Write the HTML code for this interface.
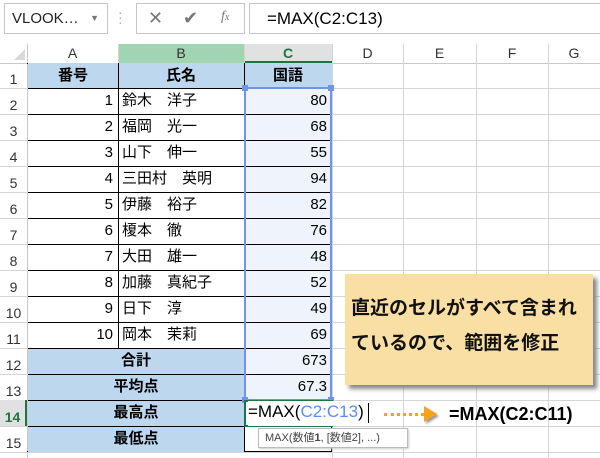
<!DOCTYPE html>
<html><head><meta charset="utf-8"><style>
*{box-sizing:border-box;margin:0;padding:0}
body{width:600px;height:458px;overflow:hidden;background:#fff;position:relative;font-family:"Liberation Sans","Noto Sans CJK JP",sans-serif;color:#000}
.a{position:absolute}
.vl{position:absolute;width:1px;background:#d4d4d4}
.hl{position:absolute;height:1px;background:#d4d4d4}
.rh{position:absolute;left:0;width:27px;font-size:14px;color:#333;text-align:center;line-height:26px;padding-top:4px}
.ch{position:absolute;top:44px;height:19px;font-size:14px;color:#333;text-align:center;line-height:19px;background:#fff}
.c{position:absolute;font-size:15px;line-height:26px;white-space:nowrap;overflow:hidden}
.hd{background:#bdd7ee;font-weight:bold;text-align:center}
.n{text-align:right;padding-right:5px}
.t{padding-left:4px}
</style></head><body>
<div class="a" style="left:4px;top:3px;width:104px;height:31px;border:1px solid #c6c6c6;font-size:15px;line-height:29px;padding-left:7px;color:#222">VLOOK…<span style="position:absolute;right:8px;top:0;font-size:9px;color:#777">▼</span></div>
<div class="a" style="left:118px;top:10px;color:#aaa;font-size:14px;line-height:5px">·<br>·<br>·</div>
<div class="a" style="left:136px;top:3px;width:109px;height:31px;border:1px solid #c6c6c6"></div>
<div class="a" style="left:148px;top:8px;font-size:18px;color:#777">✕</div>
<div class="a" style="left:183px;top:8px;font-size:18px;color:#777">✔</div>
<div class="a" style="left:221px;top:9px;font-size:14px;color:#777;font-family:'Liberation Serif',serif;font-style:italic">f<span style="font-size:10px">x</span></div>
<div class="a" style="left:249px;top:3px;width:360px;height:31px;border:1px solid #c6c6c6;font-size:17px;line-height:29px;padding-left:17px">=MAX(C2:C13)</div>
<div class="a" style="left:0;top:44px;width:600px;height:19px;background:#fff"></div>
<div class="a" style="left:14px;top:49px;width:0;height:0;border-left:11px solid transparent;border-bottom:11px solid #d8d8d8"></div>
<div class="ch" style="left:27px;width:91px">A</div>
<div class="ch" style="left:118px;width:126px;background:#a0d4b3">B</div>
<div class="ch" style="left:244px;width:88px;background:#e1e1e1;color:#217346;font-weight:bold;border-bottom:2px solid #217346">C</div>
<div class="ch" style="left:332px;width:71px">D</div>
<div class="ch" style="left:403px;width:73px">E</div>
<div class="ch" style="left:476px;width:72px">F</div>
<div class="ch" style="left:548px;width:52px">G</div>
<div class="hl" style="left:0;top:63px;width:600px;background:#c8c8c8"></div>
<div class="vl" style="left:27px;top:44px;height:414px;background:#c8c8c8"></div>
<div class="vl" style="left:118px;top:44px;height:19px"></div>
<div class="vl" style="left:244px;top:44px;height:19px"></div>
<div class="vl" style="left:332px;top:44px;height:414px"></div>
<div class="vl" style="left:403px;top:44px;height:414px"></div>
<div class="vl" style="left:476px;top:44px;height:414px"></div>
<div class="vl" style="left:548px;top:44px;height:414px"></div>
<div class="hl" style="left:0;top:88px;width:600px"></div>
<div class="hl" style="left:0;top:114px;width:600px"></div>
<div class="hl" style="left:0;top:140px;width:600px"></div>
<div class="hl" style="left:0;top:166px;width:600px"></div>
<div class="hl" style="left:0;top:192px;width:600px"></div>
<div class="hl" style="left:0;top:218px;width:600px"></div>
<div class="hl" style="left:0;top:244px;width:600px"></div>
<div class="hl" style="left:0;top:270px;width:600px"></div>
<div class="hl" style="left:0;top:296px;width:600px"></div>
<div class="hl" style="left:0;top:322px;width:600px"></div>
<div class="hl" style="left:0;top:348px;width:600px"></div>
<div class="hl" style="left:0;top:374px;width:600px"></div>
<div class="hl" style="left:0;top:400px;width:600px"></div>
<div class="hl" style="left:0;top:426px;width:600px"></div>
<div class="hl" style="left:0;top:452px;width:600px"></div>
<div class="rh" style="top:62px">1</div>
<div class="rh" style="top:88px">2</div>
<div class="rh" style="top:114px">3</div>
<div class="rh" style="top:140px">4</div>
<div class="rh" style="top:166px">5</div>
<div class="rh" style="top:192px">6</div>
<div class="rh" style="top:218px">7</div>
<div class="rh" style="top:244px">8</div>
<div class="rh" style="top:270px">9</div>
<div class="rh" style="top:296px">10</div>
<div class="rh" style="top:322px">11</div>
<div class="rh" style="top:348px">12</div>
<div class="rh" style="top:374px">13</div>
<div class="rh" style="top:400px;background:#e1e1e1;color:#217346;font-weight:bold;border-right:2px solid #217346;height:26px">14</div>
<div class="rh" style="top:426px">15</div>
<div class="a" style="left:244px;top:88px;width:88px;height:312px;background:#eef3fc"></div>
<div class="a" style="left:27px;top:63px;width:305px;height:389px;border:1px solid #000;border-left:none"></div>
<div class="c hd" style="left:28px;top:63px;width:90px;height:25px">番号</div>
<div class="c hd" style="left:118px;top:63px;width:126px;height:25px">氏名</div>
<div class="c hd" style="left:244px;top:63px;width:88px;height:25px">国語</div>
<div class="c n" style="left:28px;top:88px;width:90px">1</div><div class="c t" style="left:118px;top:88px">鈴木　洋子</div><div class="c n" style="left:244px;top:88px;width:88px">80</div>
<div class="c n" style="left:28px;top:114px;width:90px">2</div><div class="c t" style="left:118px;top:114px">福岡　光一</div><div class="c n" style="left:244px;top:114px;width:88px">68</div>
<div class="c n" style="left:28px;top:140px;width:90px">3</div><div class="c t" style="left:118px;top:140px">山下　伸一</div><div class="c n" style="left:244px;top:140px;width:88px">55</div>
<div class="c n" style="left:28px;top:166px;width:90px">4</div><div class="c t" style="left:118px;top:166px">三田村　英明</div><div class="c n" style="left:244px;top:166px;width:88px">94</div>
<div class="c n" style="left:28px;top:192px;width:90px">5</div><div class="c t" style="left:118px;top:192px">伊藤　裕子</div><div class="c n" style="left:244px;top:192px;width:88px">82</div>
<div class="c n" style="left:28px;top:218px;width:90px">6</div><div class="c t" style="left:118px;top:218px">榎本　徹</div><div class="c n" style="left:244px;top:218px;width:88px">76</div>
<div class="c n" style="left:28px;top:244px;width:90px">7</div><div class="c t" style="left:118px;top:244px">大田　雄一</div><div class="c n" style="left:244px;top:244px;width:88px">48</div>
<div class="c n" style="left:28px;top:270px;width:90px">8</div><div class="c t" style="left:118px;top:270px">加藤　真紀子</div><div class="c n" style="left:244px;top:270px;width:88px">52</div>
<div class="c n" style="left:28px;top:296px;width:90px">9</div><div class="c t" style="left:118px;top:296px">日下　淳</div><div class="c n" style="left:244px;top:296px;width:88px">49</div>
<div class="c n" style="left:28px;top:322px;width:90px">10</div><div class="c t" style="left:118px;top:322px">岡本　茉莉</div><div class="c n" style="left:244px;top:322px;width:88px">69</div>
<div class="c hd" style="left:28px;top:348px;width:216px;height:26px">合計</div><div class="c n" style="left:244px;top:348px;width:88px">673</div>
<div class="c hd" style="left:28px;top:374px;width:216px;height:26px">平均点</div><div class="c n" style="left:244px;top:374px;width:88px">67.3</div>
<div class="c hd" style="left:28px;top:400px;width:216px;height:26px">最高点</div>
<div class="c hd" style="left:28px;top:426px;width:216px;height:26px">最低点</div>
<div class="a" style="left:118px;top:63px;width:1px;height:285px;background:#000"></div>
<div class="a" style="left:244px;top:63px;width:1px;height:389px;background:#000"></div>
<div class="a" style="left:28px;top:88px;width:304px;height:1px;background:#000"></div>
<div class="a" style="left:28px;top:114px;width:304px;height:1px;background:#000"></div>
<div class="a" style="left:28px;top:140px;width:304px;height:1px;background:#000"></div>
<div class="a" style="left:28px;top:166px;width:304px;height:1px;background:#000"></div>
<div class="a" style="left:28px;top:192px;width:304px;height:1px;background:#000"></div>
<div class="a" style="left:28px;top:218px;width:304px;height:1px;background:#000"></div>
<div class="a" style="left:28px;top:244px;width:304px;height:1px;background:#000"></div>
<div class="a" style="left:28px;top:270px;width:304px;height:1px;background:#000"></div>
<div class="a" style="left:28px;top:296px;width:304px;height:1px;background:#000"></div>
<div class="a" style="left:28px;top:322px;width:304px;height:1px;background:#000"></div>
<div class="a" style="left:28px;top:348px;width:304px;height:1px;background:#000"></div>
<div class="a" style="left:28px;top:374px;width:304px;height:1px;background:#000"></div>
<div class="a" style="left:28px;top:400px;width:304px;height:1px;background:#000"></div>
<div class="a" style="left:28px;top:426px;width:304px;height:1px;background:#000"></div>
<div class="a" style="left:244px;top:87px;width:88px;height:314px;border:2px solid #6f95e8"></div>
<div class="a" style="left:242px;top:85px;width:6px;height:6px;background:#6f95e8"></div>
<div class="a" style="left:328px;top:85px;width:6px;height:6px;background:#6f95e8"></div>
<div class="a" style="left:242px;top:397px;width:6px;height:6px;background:#6f95e8"></div>
<div class="a" style="left:328px;top:397px;width:6px;height:6px;background:#6f95e8"></div>
<div class="a" style="left:244px;top:400px;width:89px;height:27px;border:2px solid #217346;background:#fff"></div>
<div class="a" style="left:248px;top:401px;width:120px;height:25px;background:#fff"></div>
<div class="a" style="left:248px;top:400px;font-size:17px;line-height:24px;white-space:nowrap">=MAX(<span style="color:#5b8ef0">C2:C13</span>)</div>
<div class="a" style="left:368px;top:403px;width:1px;height:20px;background:#000"></div>
<div class="a" style="left:258px;top:428px;width:150px;height:20px;border:1px solid #bbb;background:#fff;box-shadow:1px 1px 2px #ccc;font-size:11px;line-height:18px;padding-left:6px;color:#444;white-space:nowrap">MAX(数値<b>1</b>, [数値2], ...)</div>
<div class="a" style="left:384px;top:413px;width:40px;border-top:3px dotted #f7a21b"></div>
<div class="a" style="left:424px;top:406px;width:0;height:0;border-top:8px solid transparent;border-bottom:8px solid transparent;border-left:13px solid #f7a21b;filter:drop-shadow(2px 2px 1px #999)"></div>
<div class="a" style="left:449px;top:403px;font-size:18px;font-weight:bold;line-height:22px;white-space:nowrap">=MAX(C2:C11)</div>
<div class="a" style="left:345px;top:274px;width:248px;height:111px;background:#f9dfa3;box-shadow:4px 4px 4px #888;font-size:19px;font-weight:bold;line-height:35px;padding:17px 0 0 6px;color:#111;white-space:nowrap">直近のセルがすべて含まれ<br>ているので、範囲を修正</div>
</body></html>
